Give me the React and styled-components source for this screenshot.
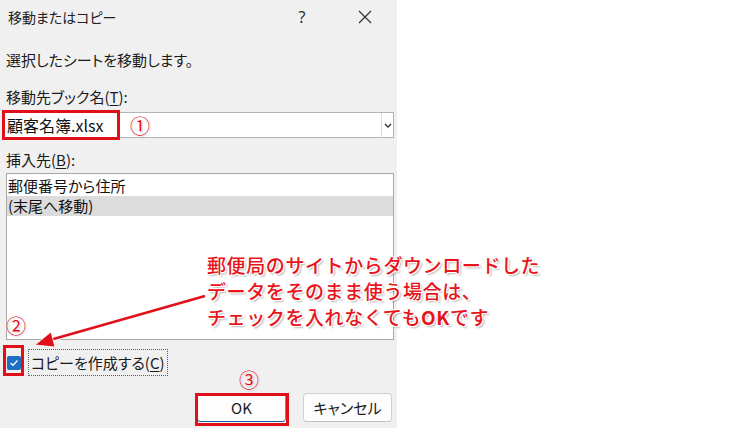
import React from "react";
import styled, { createGlobalStyle } from "styled-components";

const Global = createGlobalStyle`
  html, body { margin: 0; padding: 0; background: #ffffff; }
  body { font-family: "Noto Sans CJK JP", "Noto Sans", sans-serif; }
  * { box-sizing: border-box; }
`;

const Page = styled.div`
  width: 740px;
  height: 436px;
  position: relative;
  background: #ffffff;
  overflow: hidden;
`;

const Dialog = styled.div`
  width: 397px;
  height: 428px;
  background: #f0f0f0;
  display: flex;
  flex-direction: column;
  font-family: "Noto Sans CJK JP", sans-serif;
  font-feature-settings: "palt";
  font-size: 15px;
  color: #1a1a1a;
`;

const TitleBar = styled.div`
  height: 34px;
  display: flex;
  align-items: center;
  padding-left: 8px;
  font-size: 14px;
  color: #202020;
`;

const Title = styled.div`
  flex: 1;
`;

const TitleBtn = styled.div`
  width: ${(p) => p.$w}px;
  height: 34px;
  display: flex;
  align-items: center;
  justify-content: center;
  font-family: "Noto Sans", sans-serif;
  font-size: 16px;
  color: #303030;
`;

const Body = styled.div`
  flex: 1;
  display: flex;
  flex-direction: column;
  padding: 0 3px 0 6px;
`;

const Line = styled.div`
  height: 20px;
  line-height: 20px;
  margin-top: ${(p) => p.$mt}px;
  white-space: nowrap;
`;

const U = styled.span`
  text-decoration: underline;
  text-underline-offset: 2px;
`;

const Combo = styled.div`
  margin-top: 5px;
  margin-left: -2px;
  height: 26px;
  background: #ffffff;
  border: 1px solid #b4b4b4;
  display: flex;
  align-items: stretch;
`;

const ComboText = styled.div`
  flex: 1;
  padding-left: 2px;
  line-height: 24px;
  font-size: 16px;
  color: #111;
`;

const ComboArrow = styled.div`
  width: 12px;
  border-left: 1px solid #dcdcdc;
  display: flex;
  align-items: center;
  justify-content: center;
`;

const ListBox = styled.div`
  margin-top: 3px;
  height: 167px;
  background: #ffffff;
  border: 1px solid #a8a8a8;
  padding: 2px 0 0 0;
  display: flex;
  flex-direction: column;
`;

const ListItem = styled.div`
  height: 20px;
  line-height: 20px;
  padding-left: 1px;
  background: ${(p) => (p.$sel ? "#dcdcdc" : "transparent")};
  color: #111;
`;

const CheckRow = styled.div`
  margin-top: 9px;
  height: 27px;
  display: flex;
  align-items: center;
  gap: 7px;
`;

const CheckBox = styled.div`
  width: 14px;
  height: 14px;
  margin-left: 1px;
  border-radius: 2px;
  background: #1c6fc2;
  display: flex;
  align-items: center;
  justify-content: center;
`;

const CheckLabel = styled.div`
  height: 27px;
  line-height: 25px;
  padding: 0 2px 0 2px;
  border: 1px dotted #5a5a5a;
`;

const ButtonRow = styled.div`
  margin-top: 17px;
  display: flex;
  justify-content: flex-end;
  gap: 17px;
  padding-right: 2px;
`;

const Button = styled.div`
  width: 89px;
  height: 29px;
  border-radius: 4px;
  background: #fdfdfd;
  border: 1px solid ${(p) => (p.$def ? "#5b8fcf" : "#d0d0d0")};
  border-bottom-color: ${(p) => (p.$def ? "#1c5fb0" : "#c0c0c0")};
  display: flex;
  align-items: center;
  justify-content: center;
  font-size: 15px;
  color: #1a1a1a;
`;

const RedBox = styled.div`
  position: absolute;
  left: ${(p) => p.$x}px;
  top: ${(p) => p.$y}px;
  width: ${(p) => p.$w}px;
  height: ${(p) => p.$h}px;
  border: 3px solid #e0101a;
`;

const Num = styled.div`
  position: absolute;
  left: ${(p) => p.$x}px;
  top: ${(p) => p.$y}px;
  font-family: "Noto Sans CJK JP", sans-serif;
  font-size: 20px;
  line-height: 20px;
  color: #e0101a;
  text-shadow: 0 0 2px #fff, 0 0 2px #fff, 1px 1px 2px rgba(0,0,0,0.25);
`;

const Note = styled.div`
  position: absolute;
  left: 207px;
  top: 252px;
  font-family: "Noto Sans CJK JP", sans-serif;
  font-size: 19px;
  letter-spacing: 0.6px;
  line-height: 26px;
  font-weight: 500;
  color: #e8141b;
  white-space: nowrap;
  text-shadow:
    -1px -1px 0 #fff, 1px -1px 0 #fff, -1px 1px 0 #fff, 1px 1px 0 #fff,
    2px 2px 2px rgba(0,0,0,0.3);
`;

const Bold = styled.span`
  font-weight: 700;
`;

const ArrowSvg = styled.svg`
  position: absolute;
  left: 0;
  top: 0;
  pointer-events: none;
`;

export default function App() {
  return (
    <>
      <Global />
      <Page>
        <Dialog>
          <TitleBar>
            <Title>移動またはコピー</Title>
            <TitleBtn $w={24}>?</TitleBtn>
            <TitleBtn $w={38} />
            <TitleBtn $w={26}>
              <svg width="14" height="14" viewBox="0 0 14 14">
                <path d="M1 1 L13 13 M13 1 L1 13" stroke="#303030" strokeWidth="1.2" fill="none" />
              </svg>
            </TitleBtn>
            <TitleBtn $w={19} />
          </TitleBar>
          <Body>
            <Line $mt={16}>選択したシートを移動します。</Line>
            <Line $mt={17}>
              移動先ブック名(<U>T</U>):
            </Line>
            <Combo>
              <ComboText>顧客名簿.xlsx</ComboText>
              <ComboArrow>
                <svg width="8" height="5" viewBox="0 0 8 5">
                  <path d="M1 1 L4 4 L7 1" stroke="#333" strokeWidth="1.4" fill="none" />
                </svg>
              </ComboArrow>
            </Combo>
            <Line $mt={12}>
              挿入先(<U>B</U>):
            </Line>
            <ListBox>
              <ListItem>郵便番号から住所</ListItem>
              <ListItem $sel>(末尾へ移動)</ListItem>
            </ListBox>
            <CheckRow>
              <CheckBox>
                <svg width="10" height="8" viewBox="0 0 10 8">
                  <path d="M1.5 4 L4 6.3 L8.5 1.5" stroke="#fff" strokeWidth="1.3" fill="none" />
                </svg>
              </CheckBox>
              <CheckLabel>
                コピーを作成する(<U>C</U>)
              </CheckLabel>
            </CheckRow>
            <ButtonRow>
              <Button $def>OK</Button>
              <Button>キャンセル</Button>
            </ButtonRow>
          </Body>
        </Dialog>

        <RedBox $x={2} $y={110} $w={118} $h={30} />
        <RedBox $x={3} $y={345} $w={21} $h={31} />
        <RedBox $x={195} $y={393} $w={94} $h={33} />

        <Num $x={130} $y={116}>①</Num>
        <Num $x={6} $y={316}>②</Num>
        <Num $x={239} $y={370}>③</Num>

        <ArrowSvg width="740" height="436" viewBox="0 0 740 436">
          <line x1="205" y1="296" x2="50" y2="340" stroke="#fff" strokeWidth="4.5" />
          <line x1="205" y1="296" x2="50" y2="340" stroke="#e0101a" strokeWidth="2.5" />
          <polygon points="35,345 51,332 55,347" fill="#e0101a" stroke="#fff" strokeWidth="0.8" />
        </ArrowSvg>

        <Note>
          郵便局のサイトからダウンロードした
          <br />
          データをそのまま使う場合は、
          <br />
          チェックを入れなくても<Bold>OK</Bold>です
        </Note>
      </Page>
    </>
  );
}
